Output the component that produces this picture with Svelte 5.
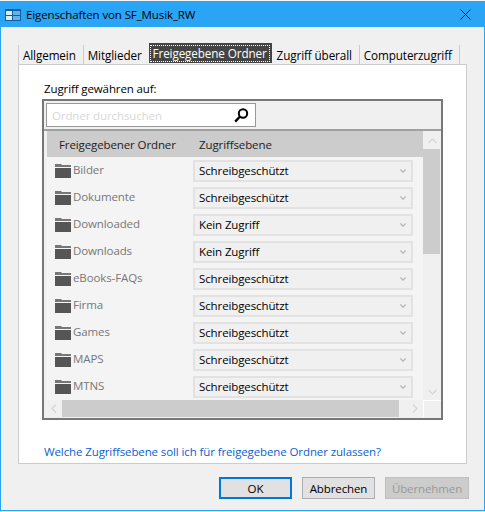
<script>
  const tabs = [
    { label: 'Allgemein' },
    { label: 'Mitglieder' },
    { label: 'Freigegebene Ordner', active: true },
    { label: 'Zugriff überall' },
    { label: 'Computerzugriff' }
  ];

  const folders = [
    { name: 'Bilder', access: 'Schreibgeschützt' },
    { name: 'Dokumente', access: 'Schreibgeschützt' },
    { name: 'Downloaded', access: 'Kein Zugriff' },
    { name: 'Downloads', access: 'Kein Zugriff' },
    { name: 'eBooks-FAQs', access: 'Schreibgeschützt' },
    { name: 'Firma', access: 'Schreibgeschützt' },
    { name: 'Games', access: 'Schreibgeschützt' },
    { name: 'MAPS', access: 'Schreibgeschützt' },
    { name: 'MTNS', access: 'Schreibgeschützt' }
  ];
</script>

<div class="window">
  <header class="titlebar">
    <svg class="app-icon" width="16" height="12" viewBox="0 0 16 12">
      <rect x="0" y="0" width="16" height="12" fill="#14609f" />
      <rect x="1" y="2" width="6" height="4" fill="#d8ecfa" />
      <rect x="8" y="2" width="7" height="4" fill="#5fb4ee" />
      <rect x="1" y="7" width="6" height="4" fill="#d8ecfa" />
      <rect x="8" y="7" width="7" height="4" fill="#5fb4ee" />
    </svg>
    <span class="title">Eigenschaften von SF_Musik_RW</span>
    <svg class="close" width="11" height="11" viewBox="0 0 11 11">
      <path d="M0.5 0.5 L10.5 10.5 M10.5 0.5 L0.5 10.5" stroke="#1a1a1a" stroke-width="1" fill="none" />
    </svg>
  </header>

  <div class="client">
    <nav class="tabs">
      {#each tabs as tab}
        <div class="tab" class:active={tab.active}>
          {#if tab.active}<span class="focus">{tab.label}</span>{:else}{tab.label}{/if}
        </div>
      {/each}
    </nav>

    <section class="panel">
      <div class="grant-label">Zugriff gewähren auf:</div>

      <div class="listbox">
        <div class="search">
          <span class="placeholder">Ordner durchsuchen</span>
          <svg width="15" height="15" viewBox="0 0 15 15">
            <circle cx="9" cy="5.5" r="4.2" fill="none" stroke="#000" stroke-width="2" />
            <path d="M6 8.5 L1.2 13.6" stroke="#000" stroke-width="2.4" fill="none" />
          </svg>
        </div>

        <div class="table-area">
          <div class="table">
            <div class="head">
              <span class="col-name">Freigegebener Ordner</span>
              <span>Zugriffsebene</span>
            </div>
            {#each folders as f}
              <div class="row">
                <svg class="folder" width="16" height="14" viewBox="0 0 16 14">
                  <path d="M0 0 H6 L7 1 H16 V3 H0 Z" fill="#777" />
                  <rect x="0" y="4" width="16" height="10" fill="#555" />
                </svg>
                <span class="fname">{f.name}</span>
                <div class="select">
                  <span>{f.access}</span>
                  <svg width="6" height="4" viewBox="0 0 6 4">
                    <path d="M0.3 0.5 L3 3.2 L5.7 0.5" stroke="#b5b5b5" stroke-width="1.2" fill="none" />
                  </svg>
                </div>
              </div>
            {/each}
          </div>

          <div class="vscroll">
            <div class="arrow-btn">
              <svg width="9" height="6" viewBox="0 0 9 6"><path d="M0.5 5 L4.5 1 L8.5 5" stroke="#d4d4d4" stroke-width="1.2" fill="none" /></svg>
            </div>
            <div class="vthumb"></div>
            <div class="vtrack"></div>
            <div class="arrow-btn">
              <svg width="9" height="6" viewBox="0 0 9 6"><path d="M0.5 1 L4.5 5 L8.5 1" stroke="#d4d4d4" stroke-width="1.2" fill="none" /></svg>
            </div>
          </div>

          <div class="hscroll">
            <div class="arrow-btn h">
              <svg width="6" height="9" viewBox="0 0 6 9"><path d="M5 0.5 L1 4.5 L5 8.5" stroke="#d4d4d4" stroke-width="1.2" fill="none" /></svg>
            </div>
            <div class="hthumb"></div>
            <div class="htrack"></div>
            <div class="arrow-btn h">
              <svg width="6" height="9" viewBox="0 0 6 9"><path d="M1 0.5 L5 4.5 L1 8.5" stroke="#d4d4d4" stroke-width="1.2" fill="none" /></svg>
            </div>
          </div>
          <div class="corner"></div>
        </div>
      </div>

      <a class="help" href="#help">Welche Zugriffsebene soll ich für freigegebene Ordner zulassen?</a>
    </section>

    <footer class="buttons">
      <button class="btn default">OK</button>
      <button class="btn">Abbrechen</button>
      <button class="btn disabled">Übernehmen</button>
    </footer>
  </div>
</div>

<style>
  :global(body) {
    margin: 0;
    background: #f4f4f4;
  }

  .window {
    width: 485px;
    height: 510px;
    margin-top: 1px;
    box-sizing: border-box;
    display: flex;
    flex-direction: column;
    border: 1px solid #2aa5f5;
    font-family: "Open Sans", "Noto Sans", sans-serif;
    font-size: 11.5px;
    letter-spacing: -0.11px;
    color: #000;
    overflow: hidden;
  }

  .titlebar {
    height: 25px;
    flex: none;
    background: #2aa5f5;
    display: flex;
    align-items: center;
    padding: 0 0 0 4px;
  }

  .app-icon {
    margin-right: 5px;
  }

  .title {
    flex: 1;
  }

  .close {
    margin-right: 13px;
  }

  .client {
    flex: 1;
    display: flex;
    flex-direction: column;
    background: #f0f0f0;
    padding: 18px 17px 0 17px;
    min-height: 0;
  }

  .tabs {
    display: flex;
    height: 19px;
    flex: none;
    align-items: stretch;
    font-size: 11.7px;
  }

  .tab {
    display: flex;
    align-items: center;
    padding: 0 7px 0 4px;
    border-left: 1px solid #ccc;
    white-space: nowrap;
  }

  .tab:last-child {
    border-right: 1px solid #ccc;
  }

  .tab.active {
    background: #444;
    color: #fff;
    border-left: none;
    padding: 0 3px 0 2px;
    margin: -2px 0 1px;
  }

  .tab.active + .tab {
    border-left: none;
    padding-left: 5px;
  }

  .focus {
    outline: 1px dotted #fff;
    padding: 0 2px;
    line-height: 15px;
  }

  .panel {
    width: 449px;
    height: 400px;
    flex: none;
    box-sizing: border-box;
    border: 1px solid #ccc;
    background: #fff;
    padding: 15px 23px 0;
    display: flex;
    flex-direction: column;
  }

  .grant-label {
    line-height: 17px;
    margin: 0 0 2px 2px;
  }

  .listbox {
    width: 401px;
    height: 321px;
    box-sizing: border-box;
    border: 2px solid #777;
    background: #f0f0f0;
    padding: 2px 2px 1px;
    display: flex;
    flex-direction: column;
  }

  .search {
    width: 210px;
    height: 24px;
    flex: none;
    box-sizing: border-box;
    background: #fff;
    border: 1px solid #999;
    display: flex;
    align-items: center;
    justify-content: space-between;
    padding: 0 6px 0 5px;
  }

  .placeholder {
    color: #d8d8d8;
  }

  .table-area {
    margin: 2px -2px 0;
    padding-left: 1px;
    border-top: 2px solid #a0a0a0;
    flex: 1;
    display: grid;
    grid-template-columns: 1fr 18px;
    grid-template-rows: 1fr 17px;
    min-height: 0;
  }

  .table {
    margin-left: 2px;
    background: #f4f4f4;
    overflow: hidden;
    min-height: 0;
  }

  .head {
    height: 26px;
    background: #ccc;
    display: flex;
    align-items: center;
    padding-left: 12px;
    color: #222;
  }

  .col-name {
    width: 140px;
  }

  .row {
    height: 27px;
    display: flex;
    align-items: center;
    padding-left: 8px;
    box-sizing: border-box;
  }

  .folder {
    flex: none;
    margin-right: 2px;
  }

  .fname {
    width: 120px;
    color: #777;
    margin-top: -2px;
  }

  .select {
    width: 220px;
    height: 22px;
    box-sizing: border-box;
    border: 2px solid #e2e2e2;
    background: #f0f0f0;
    display: flex;
    align-items: center;
    justify-content: space-between;
    padding: 0 5px 0 4px;
  }

  .vscroll {
    display: flex;
    flex-direction: column;
    background: #f0f0f0;
    padding-top: 1px;
    min-height: 0;
  }

  .arrow-btn {
    height: 17px;
    flex: none;
    display: flex;
    align-items: center;
    justify-content: center;
    background: #f0f0f0;
  }

  .arrow-btn.h {
    width: 17px;
    height: auto;
  }

  .vthumb {
    height: 105px;
    width: 17px;
    background: #ccc;
  }

  .vtrack {
    flex: 1;
  }

  .hscroll {
    display: flex;
    background: #f0f0f0;
  }

  .hthumb {
    width: 337px;
    background: #ccc;
  }

  .htrack {
    flex: 1;
  }

  .corner {
    background: #f0f0f0;
    border: 1px solid #fff;
    border-width: 1px 0 0 1px;
  }

  .help {
    margin: 23px 0 0 2px;
    color: #0a5fd0;
    text-decoration: none;
    line-height: 17px;
  }

  .buttons {
    display: flex;
    justify-content: flex-end;
    gap: 10px;
    padding: 13px 0 0;
    margin-right: -2px;
  }

  .btn {
    width: 73px;
    height: 22px;
    box-sizing: border-box;
    border: 1px solid #adadad;
    background: #e1e1e1;
    font: inherit;
    letter-spacing: inherit;
    padding: 0;
  }

  .btn.default {
    border: 2px solid #0078d7;
  }

  .btn.disabled {
    width: 84px;
    background: #ccc;
    border-color: #bfbfbf;
    color: #999;
  }
</style>
